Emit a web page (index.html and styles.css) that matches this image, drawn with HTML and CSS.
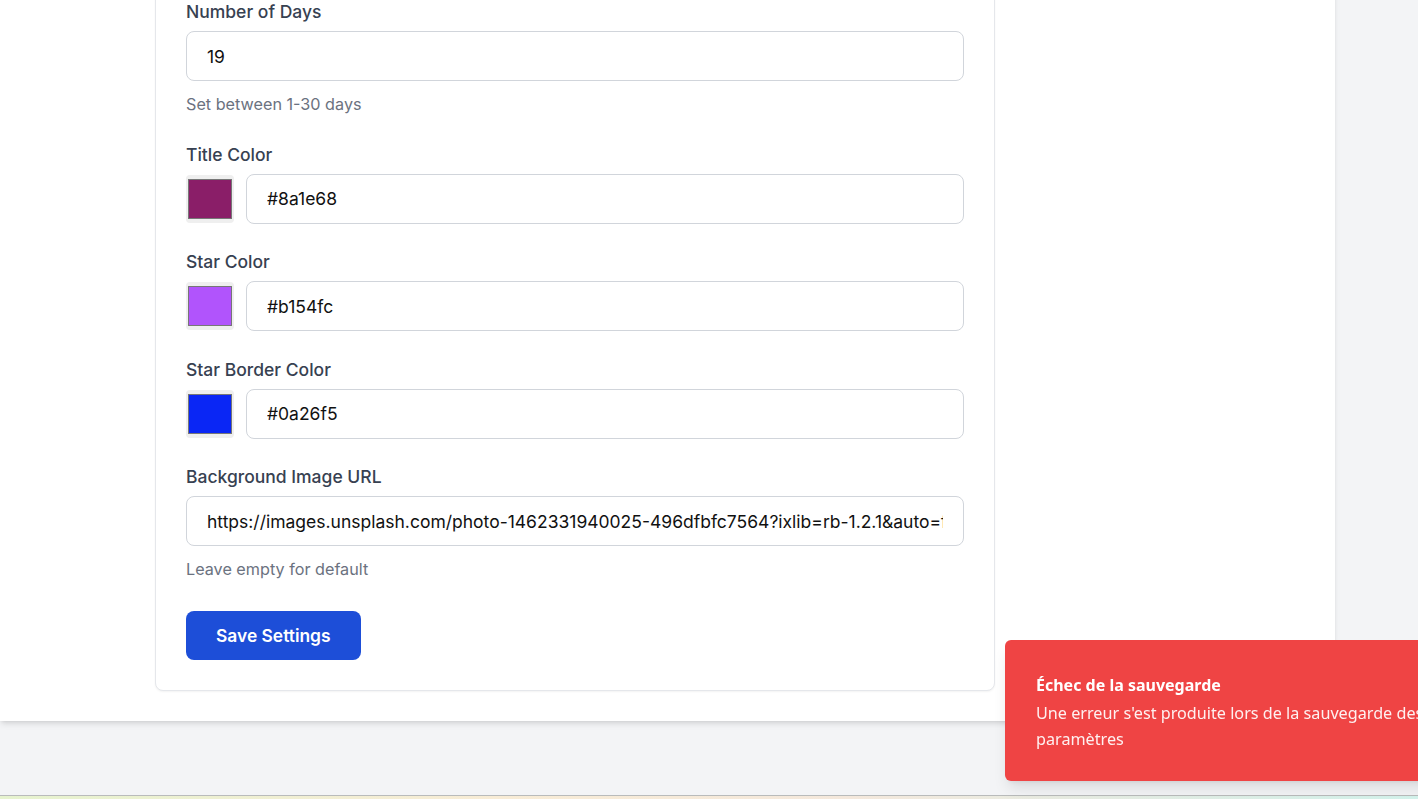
FILE: index.html
```html
<!DOCTYPE html>
<html lang="en">
<head>
<meta charset="utf-8">
<title>Settings</title>
<link rel="stylesheet" href="styles.css">
</head>
<body>
<div class="page">
  <main class="panel">
    <section class="card">
      <div class="group">
        <label class="label">Number of Days</label>
        <input class="field" type="text" value="19">
        <p class="help">Set between 1-30 days</p>
      </div>
      <div class="group">
        <label class="label">Title Color</label>
        <div class="color-row">
          <div class="swatch"><span class="swatch-fill fill-title"></span></div>
          <input class="field" type="text" value="#8a1e68">
        </div>
      </div>
      <div class="group">
        <label class="label">Star Color</label>
        <div class="color-row">
          <div class="swatch"><span class="swatch-fill fill-star"></span></div>
          <input class="field" type="text" value="#b154fc">
        </div>
      </div>
      <div class="group">
        <label class="label">Star Border Color</label>
        <div class="color-row">
          <div class="swatch"><span class="swatch-fill fill-border"></span></div>
          <input class="field" type="text" value="#0a26f5">
        </div>
      </div>
      <div class="group">
        <label class="label">Background Image URL</label>
        <input class="field" type="text" value="https://images.unsplash.com/photo-1462331940025-496dfbfc7564?ixlib=rb-1.2.1&amp;auto=format&amp;fit=crop&amp;w=1920&amp;q=80">
        <p class="help">Leave empty for default</p>
      </div>
      <button class="save" type="button">Save Settings</button>
    </section>
  </main>
  <footer class="strip"></footer>
</div>
<div class="toast" role="alert">
  <div class="toast-title">Échec de la sauvegarde</div>
  <div class="toast-body">Une erreur s'est produite lors de la sauvegarde des paramètres</div>
</div>
</body>
</html>
```

FILE: styles.css
```css
* { box-sizing: border-box; }

html, body {
  margin: 0;
  padding: 0;
  height: 799px;
  overflow: hidden;
}

body {
  background: #f3f4f6;
  font-family: Inter, "Liberation Sans", sans-serif;
  color: #111827;
}

.page {
  display: flex;
  flex-direction: column;
}

.panel {
  width: 1335px;
  background: #ffffff;
  margin-top: -31px;
  padding: 0 0 30px 155px;
  box-shadow: 0 4px 6px -1px rgba(0,0,0,0.1), 0 2px 4px -2px rgba(0,0,0,0.1);
  margin-bottom: 74px;
}

.card {
  width: 840px;
  background: #ffffff;
  border: 1px solid #e5e7eb;
  border-radius: 8px;
  padding: 30px;
  box-shadow: 0 1px 2px rgba(0,0,0,0.05);
}

.group {
  display: flex;
  flex-direction: column;
  margin-bottom: 26.5px;
}

.label {
  font-size: 17.5px;
  line-height: 24px;
  font-weight: 500;
  color: #374151;
  margin-bottom: 7px;
}

.field {
  width: 100%;
  height: 50px;
  border: 1px solid #d1d5db;
  border-radius: 8px;
  padding: 0 20px;
  font-family: Inter, "Liberation Sans", sans-serif;
  font-size: 17.5px;
  color: #111111;
  background: #ffffff;
  outline: none;
}

.help {
  margin: 11px 0 0;
  font-size: 16.2px;
  line-height: 24px;
  color: #6b7280;
}

.color-row {
  display: flex;
  align-items: center;
  gap: 12px;
}

.swatch {
  flex: 0 0 48px;
  height: 48px;
  background: #efefef;
  border-radius: 4px;
  padding: 4px 2px;
  display: flex;
}

.swatch-fill {
  flex: 1;
  border: 1px solid #777777;
}

.fill-title { background: #8a1e68; }
.fill-star { background: #b154fc; }
.fill-border { background: #0a26f5; }

.save {
  align-self: flex-start;
  margin-top: 3px;
  height: 49px;
  padding: 0 30px;
  border: none;
  border-radius: 8px;
  background: #1d4ed8;
  color: #ffffff;
  font-family: Inter, "Liberation Sans", sans-serif;
  font-size: 17.4px;
  font-weight: 600;
}

.strip {
  height: 10px;
  border-top: 1px solid #b9bbbb;
  background: linear-gradient(90deg, #e6f3cf 0%, #f8ecd6 35%, #f4e8dc 60%, #d4f3ec 100%);
}

.toast {
  position: fixed;
  left: 1005px;
  top: 640px;
  width: 470px;
  height: 141px;
  background: #ef4444;
  border-radius: 6px;
  padding: 33px 30px 28px 31px;
  color: #ffffff;
  font-family: "Noto Sans", "Open Sans", sans-serif;
  box-shadow: 0 10px 15px -3px rgba(0,0,0,0.1), 0 4px 6px -4px rgba(0,0,0,0.1);
}

.toast-title {
  font-size: 16px;
  line-height: 24px;
  font-weight: 700;
  margin-bottom: 3px;
}

.toast-body {
  font-size: 16.2px;
  line-height: 26px;
  color: rgba(255,255,255,0.92);
}
```
